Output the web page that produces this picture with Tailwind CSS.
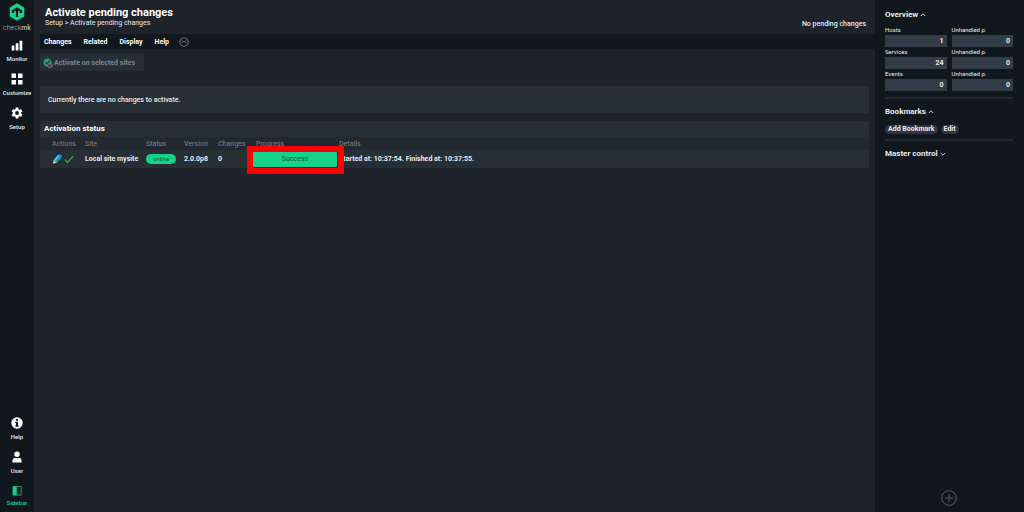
<!DOCTYPE html>
<html lang="en">
<head>
    <meta charset="UTF-8">
    <meta name="viewport" content="width=device-width, initial-scale=1.0">
    <title>Activate pending changes</title>
    <script src="https://cdn.jsdelivr.net/npm/@tailwindcss/browser@4"></script>
</head>
<body class="flex min-h-screen bg-[#1e2229] font-['Roboto',sans-serif] text-[7px] leading-[8px] text-[#e8eaec]">
    <!-- Main navigation -->
    <nav class="flex w-[34px] shrink-0 flex-col items-center bg-[#11181d] pt-[3px] pb-[5px] text-[6px] font-medium">
        <a href="#" class="flex flex-col items-center">
            <svg class="h-[18px] w-4" viewBox="0 0 16 18">
                <path fill="#15d38b" d="M8 .3l7.300 4.200v9L8 17.700.7 13.500v-9z"/>
                <path fill="none" stroke="#11181d" stroke-width="2.200" d="M8 14V5.500M3.900 10V8.200L8 5.500l4.100 2.700V10"/>
            </svg>
            <span class="mt-[3px] text-[7px] font-light text-[#b9bec2]">check<b class="font-medium">mk</b></span>
        </a>
        <a href="#" class="mt-[8px] flex flex-col items-center gap-[3px]">
            <svg class="size-3" viewBox="0 0 12 12" fill="#fff"><rect x=".7" y="5.500" width="2.700" height="5" rx=".5"/><rect x="4.700" y="3.300" width="2.700" height="7.200" rx=".5"/><rect x="8.600" y=".8" width="2.700" height="9.700" rx=".5"/></svg>
            <span>Monitor</span>
        </a>
        <a href="#" class="mt-[10px] flex flex-col items-center gap-[4px]">
            <svg class="size-3" viewBox="0 0 12 12" fill="#fff"><path d="M.5.5h4.500v4.500H.5zM7 .5h4.500v4.500H7zM.5 7h4.500v4.500H.5zM7 7h4.500v4.500H7z"/></svg>
            <span>Customize</span>
        </a>
        <a href="#" class="mt-[10px] flex flex-col items-center gap-[4px]">
            <svg class="size-3" viewBox="1 1 22 22" fill="#fff"><path d="M19.430 12.980c.04-.32.07-.64.07-.98s-.03-.66-.07-.98l2.500-1.950-2.400-4.150-3 1.200a7 7 0 0 0-1.700-1l-.45-3.120H9.600l-.45 3.120a7 7 0 0 0-1.700 1l-3-1.200-2.400 4.150 2.500 1.950a8 8 0 0 0 0 1.960l-2.500 1.950 2.400 4.150 3-1.200a7 7 0 0 0 1.700 1L9.600 22h4.800l.45-3.120a7 7 0 0 0 1.700-1l3 1.200 2.400-4.150zM12 15.500a3.500 3.500 0 1 1 0-7 3.500 3.500 0 0 1 0 7z"/></svg>
            <span>Setup</span>
        </a>
        <a href="#" class="mt-auto flex flex-col items-center gap-[4px]">
            <svg class="size-3" viewBox="0 0 12 12"><circle cx="6" cy="6" r="5.700" fill="#fff"/><path fill="#11181d" d="M5 2h2v1.800H5zM4.300 4.800H7v3.600h.8v1.300H4.300V8.400H5V6h-.7z"/></svg>
            <span>Help</span>
        </a>
        <a href="#" class="mt-[10px] flex flex-col items-center gap-[4px]">
            <svg class="size-3" viewBox="0 0 12 12" fill="#fff"><circle cx="6" cy="3.200" r="2.700"/><path d="M1.500 11.500V9.300Q1.500 7 4 6.700q2 1.200 4 0 2.500.3 2.500 2.600v2.200z"/></svg>
            <span>User</span>
        </a>
        <a href="#" class="mt-[10px] flex flex-col items-center gap-[2px] text-[#15d38b]">
            <svg class="size-3" viewBox="0 0 12 12"><path fill="none" stroke="#15d38b" stroke-width=".7" d="M2 1.500h8.200v8.600H2z"/><path fill="#15d38b" d="M2 1.500h3.800v8.600H2z"/></svg>
            <span>Sidebar</span>
        </a>
    </nav>

    <main class="min-w-0 flex-1">
        <header class="flex h-[34px] items-start justify-between pt-[6px] pr-[9px] pl-[11px]">
            <div>
                <h1 class="text-[11px] leading-[13px] font-bold text-white">Activate pending changes</h1>
                <p class="text-[7px] leading-[8px]">Setup &gt; Activate pending changes</p>
            </div>
            <p class="pt-[14px] font-medium">No pending changes</p>
        </header>

        <div class="ml-[6px] flex h-[15px] items-center gap-[10px] bg-[#11181d] pl-[4px] font-bold text-white">
            <div class="flex gap-[12px]">
                <button type="button">Changes</button>
                <button type="button">Related</button>
                <button type="button">Display</button>
                <button type="button">Help</button>
            </div>
            <button type="button" aria-label="Collapse">
                <svg class="size-[10px]" viewBox="0 0 10 10" fill="none" stroke="#8d9194" stroke-width=".8"><circle cx="5" cy="5" r="4.300"/><path d="M3.200 5.700L5 4l1.800 1.700"/></svg>
            </button>
        </div>

        <div class="mr-[6px] ml-[6px] pt-[5px]">
            <button type="button" disabled class="flex h-[17px] items-center gap-px rounded-[2px] bg-[#262e36] pr-[9px] pl-[3px] font-bold text-[#7f8488]">
                <svg class="size-[10px]" viewBox="0 0 10 10"><circle cx="4.500" cy="4.500" r="4" fill="#2f9b68"/><path fill="none" stroke="#1c4938" stroke-width="1.200" d="M2.500 4.500L4 6l3-3.500"/><circle cx="7" cy="7.300" r="2.300" fill="#30373d" stroke="#9a9ea1" stroke-width=".7"/><path stroke="#9a9ea1" stroke-width=".7" d="M7 6v1.500"/></svg>
                Activate on selected sites
            </button>

            <div class="mt-[15px] flex h-[27px] items-center rounded-[2px] bg-[#262e36] px-2 font-medium">Currently there are no changes to activate.</div>

            <h2 class="mt-[8px] flex h-[16px] items-center rounded-t-[2px] bg-[#262e36] px-[4px] text-[8px] leading-[10px] font-bold text-white">Activation status</h2>
            <table class="w-full table-fixed border-collapse text-left">
                <colgroup>
                    <col class="w-[45px]"><col class="w-[61px]"><col class="w-[38px]"><col class="w-[34px]"><col class="w-[35px]"><col class="w-[86px]"><col>
                </colgroup>
                <thead class="bg-[#22282f] text-[#70757a]">
                    <tr class="h-[13px]">
                        <th class="pl-[12px] font-medium">Actions</th>
                        <th class="font-medium">Site</th>
                        <th class="font-medium">Status</th>
                        <th class="font-medium">Version</th>
                        <th class="font-medium">Changes</th>
                        <th class="pl-[3px] font-medium">Progress</th>
                        <th class="font-medium">Details</th>
                    </tr>
                </thead>
                <tbody class="bg-[#262e36] font-bold">
                    <tr class="h-[18px]">
                        <td class="pl-[12px]">
                            <div class="flex gap-[2px]">
                                <button type="button" aria-label="Edit">
                                    <svg class="size-[10px]" viewBox="0 0 10 10"><path fill="#179bd7" d="M5.900.9Q7.500-.3 8.900.8t.5 2.900L5 8.800 1.500 6.200z"/><path fill="#4fbdec" d="M5.900.9l1.400.8-3.900 5.600-1.900-1.100z"/><path fill="#f3c73e" d="M1.500 6.200L5 8.800.9 9.800z"/></svg>
                                </button>
                                <button type="button" aria-label="Activate">
                                    <svg class="size-[10px]" viewBox="0 0 10 10" fill="none" stroke="#3d9b40" stroke-width="1.400"><path d="M.8 5.500l2.700 3L9.300 2"/></svg>
                                </button>
                            </div>
                        </td>
                        <td>Local site mysite</td>
                        <td><span class="flex h-[10px] w-[30px] items-center justify-center rounded-full bg-[#15d38b] text-[6px] font-normal text-[#16553e]">online</span></td>
                        <td>2.0.0p8</td>
                        <td>0</td>
                        <td class="relative">
                            <div class="flex h-[15px] w-[84px] items-center justify-center rounded-[1px] bg-[#15d38b] font-normal text-[#16553e]">Success</div>
                            <div class="absolute -top-[4px] -left-[6px] h-[28px] w-[97px] border-6 border-[#fe0000]"></div>
                        </td>
                        <td>Started at: 10:37:54. Finished at: 10:37:55.</td>
                    </tr>
                </tbody>
            </table>
        </div>
    </main>

    <!-- Sidebar -->
    <aside class="flex w-[149px] shrink-0 flex-col bg-[#11181d] pt-[10px] pr-[11px] pb-[5px] pl-[10px]">
        <section class="border-b-2 border-[#23292f] pb-[5px]">
            <h2 class="flex items-center gap-[2px] text-[8px] leading-[10px] font-bold">Overview
                <svg class="size-[6px]" viewBox="0 0 6 6" fill="none" stroke="#d5d8da"><path d="M.8 4L3 1.800 5.200 4"/></svg>
            </h2>
            <dl class="mt-[6px] grid grid-cols-2 gap-x-[5px] text-[6px]">
                <div class="h-[22px]"><dt class="h-[9px]">Hosts</dt><dd class="h-[12px] bg-[#333d47] pr-[3px] text-right text-[7px] leading-[12px] font-bold">1</dd></div>
                <div class="h-[22px]"><dt class="h-[9px]">Unhandled p.</dt><dd class="h-[12px] bg-[#333d47] pr-[3px] text-right text-[7px] leading-[12px] font-bold">0</dd></div>
                <div class="h-[22px]"><dt class="h-[9px]">Services</dt><dd class="h-[12px] bg-[#333d47] pr-[3px] text-right text-[7px] leading-[12px] font-bold">24</dd></div>
                <div class="h-[22px]"><dt class="h-[9px]">Unhandled p.</dt><dd class="h-[12px] bg-[#333d47] pr-[3px] text-right text-[7px] leading-[12px] font-bold">0</dd></div>
                <div class="h-[22px]"><dt class="h-[9px]">Events</dt><dd class="h-[12px] bg-[#333d47] pr-[3px] text-right text-[7px] leading-[12px] font-bold">0</dd></div>
                <div class="h-[22px]"><dt class="h-[9px]">Unhandled p.</dt><dd class="h-[12px] bg-[#333d47] pr-[3px] text-right text-[7px] leading-[12px] font-bold">0</dd></div>
            </dl>
        </section>
        <section class="border-b-2 border-[#23292f] pt-[8px] pb-[5px]">
            <h2 class="flex items-center gap-[2px] text-[8px] leading-[10px] font-bold">Bookmarks
                <svg class="size-[6px]" viewBox="0 0 6 6" fill="none" stroke="#d5d8da"><path d="M.8 4L3 1.800 5.200 4"/></svg>
            </h2>
            <div class="mt-[8px] flex gap-[3px] text-[7px] leading-[9px] font-bold">
                <button type="button" class="h-[9px] rounded-full bg-[#2c3544] px-[3px]">Add Bookmark</button>
                <button type="button" class="h-[9px] rounded-full bg-[#2c3544] px-[3px]">Edit</button>
            </div>
        </section>
        <section class="pt-[8px]">
            <h2 class="flex items-center gap-[2px] text-[8px] leading-[10px] font-bold">Master control
                <svg class="size-[6px]" viewBox="0 0 6 6" fill="none" stroke="#d5d8da"><path d="M.8 2L3 4.200 5.200 2"/></svg>
            </h2>
        </section>
        <button type="button" aria-label="Add element" class="mt-auto self-center">
            <svg class="size-[18px]" viewBox="0 0 18 18" fill="none" stroke="#525b72"><circle cx="9" cy="9" r="7.300"/><path d="M9 5v8M5 9h8"/></svg>
        </button>
    </aside>
</body>
</html>
